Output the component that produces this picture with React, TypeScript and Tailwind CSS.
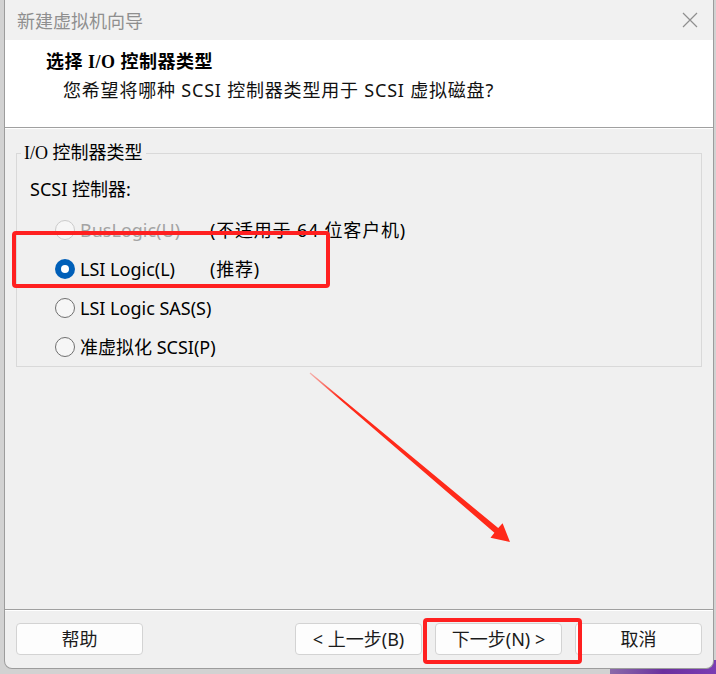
import React from 'react'

type Option = {
  label: string
  note?: string
  checked?: boolean
  disabled?: boolean
}

const options: Option[] = [
  { label: 'BusLogic(U)', note: '(不适用于 64 位客户机)', disabled: true },
  { label: 'LSI Logic(L)', note: '(推荐)', checked: true },
  { label: 'LSI Logic SAS(S)' },
  { label: '准虚拟化 SCSI(P)' },
]

function Radio({ checked, disabled }: { checked?: boolean; disabled?: boolean }) {
  if (checked) {
    return (
      <span className="flex h-[20px] w-[20px] shrink-0 items-center justify-center rounded-full bg-[#005fb8]">
        <span className="h-[8px] w-[8px] rounded-full bg-white" />
      </span>
    )
  }
  return (
    <span
      className={`h-[20px] w-[20px] shrink-0 rounded-full border-[1.5px] bg-[#f6f6f6] ${
        disabled ? 'border-[#cbcbcb]' : 'border-[#6f6f6f]'
      }`}
    />
  )
}

function Button({ children }: { children: React.ReactNode }) {
  return (
    <button className="flex h-[32px] w-[127px] items-center justify-center rounded-[4px] border border-[#d3d3d3] bg-[#fdfdfd] text-[18px] leading-[24px] text-[#1b1b1b]">
      {children}
    </button>
  )
}

export default function App() {
  return (
    <div className="relative flex h-[674px] w-[716px] overflow-hidden bg-[#d2d2d2] pb-[5px] pl-[4px] pr-[2px] font-['Noto_Sans','Noto_Sans_CJK_SC',sans-serif]">
      {/* desktop wallpaper peeking out at the bottom right */}
      <div className="absolute bottom-0 left-[610px] right-0 top-[660px] bg-gradient-to-r from-[#8a6aa8] via-[#6b2f9e] to-[#7a3db3]" />

      {/* dialog window */}
      <div className="relative flex w-[710px] flex-col overflow-hidden rounded-b-[8px] border border-t-0 border-[#9c9c9c] bg-[#f0f0f0]">
        {/* title bar */}
        <div className="flex h-[40px] shrink-0 items-center justify-between bg-[#f1f1f1] pl-[12px] pr-[15px]">
          <span className="text-[18px] leading-[24px] text-[#8f8f8f] font-['Noto_Sans_CJK_SC',sans-serif]">新建虚拟机向导</span>
          <svg width="16" height="16" viewBox="0 0 16 16" className="text-[#8f8f8f]">
            <path d="M1 1 L15 15 M15 1 L1 15" stroke="currentColor" strokeWidth="1.2" fill="none" />
          </svg>
        </div>

        {/* header */}
        <div className="flex h-[88px] shrink-0 flex-col border-b border-[#a0a0a0] bg-white pl-[41px] pt-[10px]">
          <span className="text-[18px] font-bold leading-[24px] tracking-[0.5px] text-black font-['Liberation_Serif','Noto_Sans_CJK_SC',serif]">
            选择 I/O 控制器类型
          </span>
          <span className="mt-[4px] whitespace-nowrap pl-[17px] text-[18px] leading-[24px] tracking-[0.8px] text-[#111]">
            您希望将哪种 SCSI 控制器类型用于 SCSI 虚拟磁盘?
          </span>
        </div>

        {/* body */}
        <div className="flex flex-1 flex-col border-t border-b border-t-white border-b-[#a0a0a0] px-[11px] pt-[13px]">
          <fieldset className="border border-[#d9d9d9] px-0 pb-0 pt-[13px]">
            <legend className="ml-[4px] px-[3px] text-[18px] leading-[22px] text-black font-['Liberation_Serif','Noto_Sans_CJK_SC',serif]">
              I/O 控制器类型
            </legend>
            <div className="pl-[13px] text-[18px] leading-[24px] text-black">SCSI 控制器:</div>
            <div className="mt-[9px] flex flex-col">
              {options.map((opt) => (
                <div key={opt.label} className="flex h-[39px] items-center whitespace-nowrap pl-[38px]">
                  <Radio checked={opt.checked} disabled={opt.disabled} />
                  <span
                    className={`ml-[5px] min-w-[130px] text-[18px] leading-[24px] ${
                      opt.disabled ? 'text-[#a3a3a3]' : 'text-black'
                    }`}
                  >
                    {opt.label}
                  </span>
                  {opt.note && (
                    <span className="text-[18px] leading-[24px] tracking-[0.8px] text-black">{opt.note}</span>
                  )}
                </div>
              ))}
            </div>
          </fieldset>
        </div>

        {/* footer buttons */}
        <div className="flex h-[58px] shrink-0 items-start justify-between border-t border-white px-[11px] pt-[12px]">
          <Button>帮助</Button>
          <div className="flex gap-[13px]">
            <Button>&lt; 上一步(B)</Button>
            <Button>下一步(N) &gt;</Button>
            <Button>取消</Button>
          </div>
        </div>
      </div>

      {/* red annotations drawn over the dialog */}
      <div className="absolute left-[12px] top-[231px] h-[57px] w-[318px] rounded-[4px] border-4 border-[#ff2020]" />
      <div className="absolute left-[423px] top-[618px] h-[46px] w-[159px] rounded-[4px] border-4 border-[#ff2020]" />
      <svg className="absolute left-0 top-0" width="716" height="674" viewBox="0 0 716 674">
        <defs>
          <linearGradient id="fade" x1="310" y1="373" x2="510" y2="542" gradientUnits="userSpaceOnUse">
            <stop offset="0" stopColor="#ff2a1a" stopOpacity="0.3" />
            <stop offset="0.15" stopColor="#ff2a1a" stopOpacity="1" />
            <stop offset="1" stopColor="#ff2a1a" />
          </linearGradient>
        </defs>
        <polygon
          points="309.6,373.4 494.4,532.7 490.5,537.8 510,542 502.6,523.2 498.2,528.1 310.4,372.6"
          fill="url(#fade)"
        />
      </svg>
    </div>
  )
}
